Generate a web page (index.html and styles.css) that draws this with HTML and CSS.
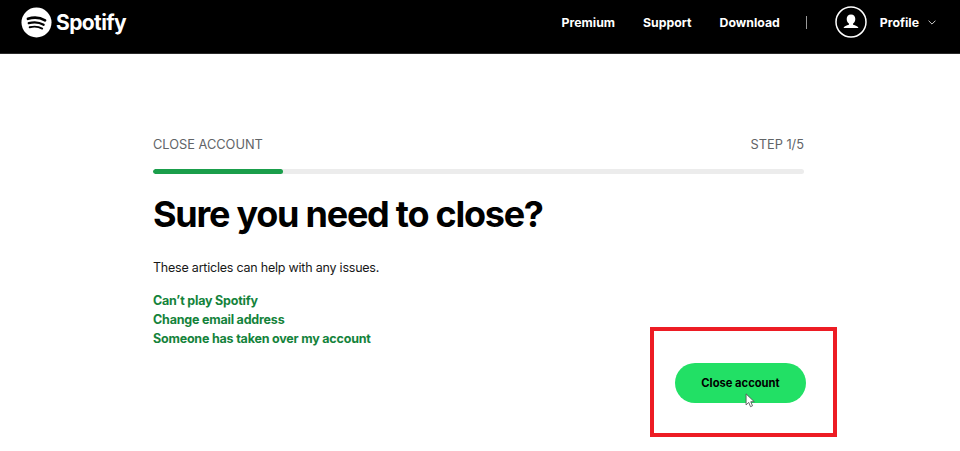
FILE: index.html
```
<!DOCTYPE html>
<html lang="en">
<head>
<meta charset="utf-8">
<title>Close account</title>
<link rel="stylesheet" href="styles.css">
</head>
<body>
<header class="topbar">
  <a class="brand" href="#">
    <svg class="brand-mark" viewBox="0 0 32 32" width="32" height="32" aria-hidden="true">
      <circle cx="16" cy="16" r="15.5" fill="#fff"/>
      <path d="M7.2 12.2c5.6-1.700 12.400-1.400 17.600 1.600" class="wave wave-a"/>
      <path d="M8 16.700c5-1.400 10.800-1 15.400 1.600" class="wave wave-b"/>
      <path d="M8.900 20.900c4.300-1.100 9.200-.8 13 1.400" class="wave wave-c"/>
    </svg>
    <span class="brand-name">Spotify</span>
  </a>
  <nav class="nav">
    <a href="#">Premium</a>
    <a href="#">Support</a>
    <a href="#">Download</a>
    <span class="nav-sep"></span>
    <a class="profile" href="#">
      <svg class="avatar" viewBox="0 0 32 32" width="32" height="32" aria-hidden="true">
        <circle cx="16" cy="16" r="15" fill="none" stroke="#fff" stroke-width="1.5"/>
        <path d="M16 8.500c-2.800 0-4.300 2-4.300 4.600 0 2 .9 3.600 2.200 4.400v1.300c-2.400.6-4.700 1.500-5.400 3.100h15c-.7-1.600-3-2.500-5.400-3.100v-1.300c1.300-.8 2.200-2.400 2.200-4.400 0-2.600-1.500-4.600-4.300-4.600z" fill="#fff"/>
      </svg>
      <span>Profile</span>
      <svg class="chevron" viewBox="0 0 10 6" width="8" height="5" aria-hidden="true">
        <path d="M.7.7 5 5 9.300.7" fill="none" stroke="#fff" stroke-width="1"/>
      </svg>
    </a>
  </nav>
</header>

<main class="page">
  <div class="step-row">
    <span>CLOSE ACCOUNT</span>
    <span>STEP 1/5</span>
  </div>
  <div class="progress"><div class="progress-fill" style="width:20%"></div></div>
  <h1 class="title">Sure you need to close?</h1>
  <p class="lead">These articles can help with any issues.</p>
  <ul class="links">
    <li><a href="#">Can’t play Spotify</a></li>
    <li><a href="#">Change email address</a></li>
    <li><a href="#">Someone has taken over my account</a></li>
  </ul>
  <div class="actions">
    <button class="close-btn" type="button">Close account</button>
  </div>
</main>

<div class="highlight"></div>
<svg class="cursor" viewBox="0 0 12 17" width="11" height="15" aria-hidden="true">
  <path d="M1 1v12.500l3-2.800 2 4.800 2.300-1-2-4.600h4z" fill="#fff" stroke="#555" stroke-width="1"/>
</svg>
</body>
</html>
```

FILE: styles.css
```
* { box-sizing: border-box; }
html, body { margin: 0; padding: 0; }
body {
  height: 451px;
  overflow: hidden;
  background: #fff;
  color: #000;
  font-family: Inter, "Liberation Sans", sans-serif;
  position: relative;
}
a { text-decoration: none; color: inherit; }

.topbar {
  height: 54px;
  background: #000;
  border-bottom: 1px solid #2a2a2a;
  display: flex;
  align-items: center;
  justify-content: space-between;
  padding: 0 24px 9px 21px;
  color: #fff;
}
.brand { display: flex; align-items: center; gap: 4px; }
.brand-mark { display: block; width: 31px; height: 31px; }
.wave { fill: none; stroke: #000; stroke-linecap: round; }
.wave-a { stroke-width: 2.8; }
.wave-b { stroke-width: 2.3; }
.wave-c { stroke-width: 1.9; }
.brand-name { font-size: 21px; font-weight: 700; letter-spacing: -0.6px; line-height: 1; }

.nav { display: flex; align-items: center; font-size: 12.3px; font-weight: 700; gap: 28px; }
.nav-sep { width: 1px; height: 13px; background: #999; margin-left: -2px; }
.profile { display: flex; align-items: center; }
.avatar { margin-right: 13px; display: block; }
.chevron { margin-left: 9px; display: block; }

.page { width: 651px; margin-left: 153px; padding-top: 82px; }
.step-row {
  display: flex;
  justify-content: space-between;
  font-size: 12.8px;
  line-height: 17px;
  color: #616467;
}
.progress {
  height: 5px;
  margin-top: 16px;
  border-radius: 3px;
  background: #ececec;
  overflow: hidden;
}
.progress-fill { height: 100%; background: #1a9e4b; border-radius: 3px; }
.title {
  margin: 17px 0 0;
  font-size: 36px;
  line-height: 46px;
  font-weight: 700;
  letter-spacing: -1.25px;
}
.lead { margin: 23px 0 0; font-size: 12.5px; line-height: 16px; letter-spacing: -0.22px; color: #181818; }
.links {
  list-style: none;
  margin: 15px 0 0;
  padding: 0;
  color: #14833b;
  font-size: 12.5px;
  font-weight: 700;
  line-height: 19px;
  letter-spacing: -0.2px;
}
.actions { display: flex; justify-content: flex-end; margin-top: 15px; }
.close-btn {
  width: 131px;
  height: 40px;
  margin-right: -2px;
  border: 0;
  border-radius: 20px;
  background: #22e065;
  color: #000;
  font: 700 11.2px Inter, "Liberation Sans", sans-serif;
}

.highlight {
  position: absolute;
  left: 650px;
  top: 327px;
  width: 187px;
  height: 110px;
  border: 4px solid #ed1c24;
}
.cursor { position: absolute; left: 745px; top: 393px; }
```
